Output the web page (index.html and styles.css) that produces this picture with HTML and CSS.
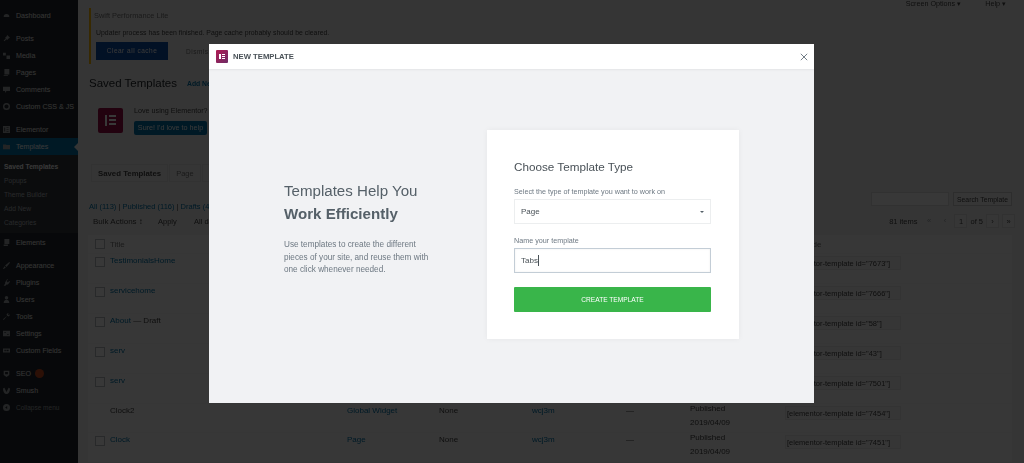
FILE: index.html
```html
<!DOCTYPE html>
<html>

<head>
    <title>New Template</title>
    <link rel="stylesheet" href="styles.css">
</head>

<body>
    <div class="wp_page">
        <!-- ADMIN MENU -->
        <aside class="admin_menu">
            <a class="menu_item first"><svg viewBox="0 0 10 10"><path d="M1 7a4 4 0 1 1 8 0z"/></svg>Dashboard</a>
            <a class="menu_item group"><svg viewBox="0 0 10 10"><path d="M6 0l4 4-2 1-2 2-1-1-3 3-1-1 3-3-1-1 2-2z"/></svg>Posts</a>
            <a class="menu_item"><svg viewBox="0 0 10 10"><path d="M0 1h4v4H0zM5 5h5v5H5z"/></svg>Media</a>
            <a class="menu_item"><svg viewBox="0 0 10 10"><path d="M2 0h7v8H2zM1 2v8h6v-1H1z"/></svg>Pages</a>
            <a class="menu_item"><svg viewBox="0 0 10 10"><path d="M0 1h10v6H5l-2 3V7H0z"/></svg>Comments</a>
            <a class="menu_item"><svg viewBox="0 0 10 10"><path d="M5 0a5 5 0 1 0 0 10A5 5 0 0 0 5 0zm0 2a3 3 0 1 1 0 6 3 3 0 0 1 0-6z"/></svg>Custom CSS &amp; JS</a>
            <a class="menu_item group"><svg viewBox="0 0 10 10"><path d="M0 0h10v10H0zM2 2v6h1V2zm3 0v1h3V2zm0 2.500v1h3v-1zM5 7v1h3V7z"/></svg>Elementor</a>
            <a class="menu_item current"><svg viewBox="0 0 10 10"><path d="M0 2h4l1 1h5v6H0z"/></svg>Templates</a>
            <div class="sub_menu">
                <a class="sub_item active">Saved Templates</a>
                <a class="sub_item">Popups</a>
                <a class="sub_item">Theme Builder</a>
                <a class="sub_item">Add New</a>
                <a class="sub_item">Categories</a>
            </div>
            <a class="menu_item elements"><svg viewBox="0 0 10 10"><path d="M2 0h7v7H2zM1 2v8h6V8H1z"/></svg>Elements</a>
            <a class="menu_item group"><svg viewBox="0 0 10 10"><path d="M9 0l1 1-5 6-2-2zM2 6l2 2-3 2H0z"/></svg>Appearance</a>
            <a class="menu_item"><svg viewBox="0 0 10 10"><path d="M6 0l1 1-2 2 2 2 2-2 1 1-3 4-2 0-2 2-2-1 2-2V5z"/></svg>Plugins</a>
            <a class="menu_item"><svg viewBox="0 0 10 10"><path d="M5 0a2.500 2.500 0 1 1 0 5 2.500 2.500 0 0 1 0-5zM1 10c0-6 8-6 8 0z"/></svg>Users</a>
            <a class="menu_item"><svg viewBox="0 0 10 10"><path d="M7 0l-2 2 1 2-6 5 1 1 5-6 2 1 2-2-1-1-1 1-1-1 1-1z"/></svg>Tools</a>
            <a class="menu_item"><svg viewBox="0 0 10 10"><path d="M0 1h10v8H0zM2 3v1h2V3zm4 3v1h2V6z"/></svg>Settings</a>
            <a class="menu_item"><svg viewBox="0 0 10 10"><path d="M0 2h10v6H0zM2 4v2h2V4zm3 0v2h3V4z"/></svg>Custom Fields</a>
            <a class="menu_item group"><svg viewBox="0 0 10 10"><path d="M1 1h8v6L5 10 1 7zM3 3v3h4V3z"/></svg>SEO <span class="badge"></span></a>
            <a class="menu_item"><svg viewBox="0 0 10 10"><path d="M0 2l2-1 3 6 3-6 2 1c0 5-2 8-5 8S0 7 0 2z"/></svg>Smush</a>
            <a class="menu_item collapse"><svg viewBox="0 0 10 10"><path d="M5 0a5 5 0 1 0 0 10A5 5 0 0 0 5 0zM6 3v4L3 5z"/></svg>Collapse menu</a>
        </aside>

        <!-- PAGE BEHIND THE DIALOG -->
        <main class="wp_content">
            <div class="screen_tabs">
                <span>Screen Options &#9662;</span>
                <span>Help &#9662;</span>
            </div>
            <div class="notice">
                <p class="notice_title">Swift Performance Lite</p>
                <p class="notice_text">Updater process has been finished. Page cache probably should be cleared.</p>
                <div class="notice_buttons">
                    <span class="clear_button">Clear all cache</span>
                    <span class="dismiss_button">Dismiss</span>
                </div>
            </div>
            <div class="page_title">
                <h1>Saved Templates</h1>
                <span class="add_new">Add New</span>
            </div>
            <div class="rating_box">
                <span class="rating_logo"><i></i><b></b></span>
                <div>
                    <p>Love using Elementor? Elementor is great</p>
                    <span class="rating_button">Sure! I'd love to help</span>
                </div>
            </div>
            <div class="tabs">
                <span class="tab active">Saved Templates</span>
                <span class="tab">Page</span>
                <span class="tab">Section</span>
            </div>
            <div class="search_row">
                <span class="search_input"></span>
                <span class="search_button">Search Template</span>
            </div>
            <div class="filter_links"><a>All (113)</a> | <a>Published (116)</a> | <a>Drafts (4)</a></div>
            <div class="bulk_row">
                <span class="bulk_select">Bulk Actions &#8597;</span>
                <span class="bulk_apply">Apply</span>
                <span class="bulk_all">All dates</span>
                <div class="pagination">
                    <span class="items">81 items</span>
                    <span class="page_btn">&laquo;</span>
                    <span class="page_btn">&lsaquo;</span>
                    <span class="page_btn on">1</span>
                    <span>of 5</span>
                    <span class="page_btn on">&rsaquo;</span>
                    <span class="page_btn on">&raquo;</span>
                </div>
            </div>
            <table class="list_table">
                <thead>
                    <tr>
                        <td class="check"><span></span></td>
                        <td class="title_cell">Title</td>
                        <td class="type_cell"></td>
                        <td class="none_cell"></td>
                        <td class="author_cell"></td>
                        <td class="dash_cell"></td>
                        <td class="date_cell"></td>
                        <td>Shortcode</td>
                    </tr>
                </thead>
                <tbody>
                    <tr>
                        <td class="check"><span></span></td>
                        <td class="title_cell"><a>TestimonialsHome</a></td>
                        <td></td><td></td><td></td><td></td><td></td>
                        <td><span class="shortcode">[elementor-template id="7673"]</span></td>
                    </tr>
                    <tr>
                        <td class="check"><span></span></td>
                        <td class="title_cell"><a>servicehome</a></td>
                        <td></td><td></td><td></td><td></td><td></td>
                        <td><span class="shortcode">[elementor-template id="7666"]</span></td>
                    </tr>
                    <tr>
                        <td class="check"><span></span></td>
                        <td class="title_cell"><a>About</a> — Draft</td>
                        <td></td><td></td><td></td><td></td><td></td>
                        <td><span class="shortcode">[elementor-template id="58"]</span></td>
                    </tr>
                    <tr>
                        <td class="check"><span></span></td>
                        <td class="title_cell"><a>serv</a></td>
                        <td></td><td></td><td></td><td></td><td></td>
                        <td><span class="shortcode">[elementor-template id="43"]</span></td>
                    </tr>
                    <tr>
                        <td class="check"><span></span></td>
                        <td class="title_cell"><a>serv</a></td>
                        <td></td><td></td><td></td><td></td><td></td>
                        <td><span class="shortcode">[elementor-template id="7501"]</span></td>
                    </tr>
                    <tr>
                        <td class="check"></td>
                        <td class="title_cell">Clock2</td>
                        <td><a>Global Widget</a></td>
                        <td>None</td>
                        <td><a>wcj3m</a></td>
                        <td>—</td>
                        <td><span class="date_text">Published<br>2019/04/09</span></td>
                        <td><span class="shortcode">[elementor-template id="7454"]</span></td>
                    </tr>
                    <tr>
                        <td class="check"><span></span></td>
                        <td class="title_cell"><a>Clock</a></td>
                        <td><a>Page</a></td>
                        <td>None</td>
                        <td><a>wcj3m</a></td>
                        <td>—</td>
                        <td><span class="date_text">Published<br>2019/04/09</span></td>
                        <td><span class="shortcode">[elementor-template id="7451"]</span></td>
                    </tr>
                </tbody>
            </table>
        </main>
    </div>

    <div class="overlay"></div>

    <!-- NEW TEMPLATE DIALOG -->
    <div class="dialog">
        <header class="dialog_header">
            <span class="dialog_logo"><i></i><b></b></span>
            <span class="dialog_title">NEW TEMPLATE</span>
            <svg class="dialog_close" viewBox="0 0 10 10"><path d="M1 1l8 8M9 1l-8 8"/></svg>
        </header>
        <div class="dialog_body">
            <div class="dialog_intro">
                <h2>Templates Help You <strong>Work Efficiently</strong></h2>
                <p>Use templates to create the different pieces of your site, and reuse them with one click whenever needed.</p>
            </div>
            <form class="template_form">
                <h3>Choose Template Type</h3>
                <label>Select the type of template you want to work on</label>
                <div class="select_box">Page<span class="select_arrow"></span></div>
                <label class="name_label">Name your template</label>
                <div class="name_input">Tabs<span class="caret"></span></div>
                <div class="create_button">CREATE TEMPLATE</div>
            </form>
        </div>
    </div>
</body>

</html>
```
FILE: styles.css
```css
* {
    box-sizing: border-box;
}

html,
body {
    margin: 0;
    height: 463px;
    overflow: hidden;
}

body {
    position: relative;
    font-family: "Liberation Sans", Arial, sans-serif;
    background-color: #f1f1f1;
}

p,
h1,
h2,
h3 {
    margin: 0;
    font-weight: normal;
}

.wp_page {
    display: flex;
    height: 463px;
    filter: blur(0.7px);
    font-size: 8px;
    color: #444;
}

a {
    color: #0073aa;
}

/* admin menu */
.admin_menu {
    flex: 0 0 78px;
    width: 78px;
    min-width: 0;
    padding-top: 7px;
    background-color: #23282d;
}

.menu_item {
    display: flex;
    align-items: center;
    gap: 6px;
    height: 17px;
    padding-left: 3px;
    font-size: 7.1px;
    white-space: nowrap;
    color: #eee;
}

.menu_item svg {
    flex: 0 0 7px;
    width: 7px;
    height: 7px;
    fill: #a0a5aa;
}

.menu_item.group {
    margin-top: 6px;
}

.menu_item.current {
    margin-top: 0;
    background-color: #0073aa;
    color: #fff;
    position: relative;
}

.menu_item.current::after {
    content: "";
    position: absolute;
    right: 0;
    top: 5px;
    border: 4px solid transparent;
    border-right-color: #f1f1f1;
    border-left: 0;
}

.menu_item.elements {
    margin-top: 1px;
}

.menu_item.collapse {
    font-size: 6.5px;
    color: #a0a5aa;
}

.sub_menu {
    display: flex;
    flex-direction: column;
    padding: 5px 0 3px 4px;
    background-color: #32373c;
}

.sub_item {
    height: 14px;
    line-height: 14px;
    font-size: 6.7px;
    color: #b4b9be;
}

.sub_item.active {
    font-weight: bold;
    color: #fff;
}

.badge {
    display: inline-block;
    width: 9px;
    height: 9px;
    margin-left: -2px;
    border-radius: 50%;
    background-color: #ca4a1f;
}

/* page behind */
.wp_content {
    position: relative;
    flex: 1;
    padding: 8px 12px 0 11px;
    min-width: 0;
}

.screen_tabs {
    position: absolute;
    top: -1px;
    right: 18px;
    display: flex;
    gap: 24px;
    font-size: 7.2px;
}

.notice {
    height: 56px;
    padding: 3px 0 0 3px;
    border-left: 2px solid #ffb900;
    font-size: 6.9px;
}

.notice_title {
    font-size: 7.4px;
    color: #777;
}

.notice_text {
    margin-top: 9px;
    padding-left: 2px;
}

.notice_buttons {
    display: flex;
    align-items: center;
    gap: 18px;
    margin-top: 6px;
    padding-left: 2px;
}

.clear_button {
    width: 72px;
    height: 18px;
    line-height: 18px;
    text-align: center;
    font-size: 6.5px;
    letter-spacing: 0.5px;
    background-color: #0d4fa8;
    color: #fff;
}

.dismiss_button {
    font-size: 6.5px;
    letter-spacing: 0.5px;
    color: #777;
}

.page_title {
    display: flex;
    align-items: center;
    gap: 10px;
    margin-top: 12px;
}

.page_title h1 {
    font-size: 11.5px;
    line-height: 15px;
    color: #23282d;
}

.add_new {
    font-size: 6.8px;
    font-weight: bold;
    color: #0073aa;
}

.rating_box {
    display: flex;
    gap: 11px;
    height: 48px;
    margin-top: 8px;
    padding: 9px 0 0 9px;
    font-size: 7.2px;
}

.rating_box p {
    margin-top: -2px;
}

.rating_logo {
    display: flex;
    gap: 2px;
    width: 25px;
    height: 25px;
    padding: 7px 7px;
    border-radius: 2px;
    background-color: #9b0a46;
}

.rating_logo i {
    width: 2px;
    background-color: #fff;
}

.rating_logo b {
    flex: 1;
    background: repeating-linear-gradient(#fff 0 2px, transparent 2px 4px);
}

.rating_button {
    display: block;
    width: 73px;
    height: 14px;
    margin-top: 6px;
    line-height: 14px;
    text-align: center;
    border-radius: 2px;
    background-color: #0073aa;
    color: #fff;
}

.tabs {
    display: flex;
    gap: 1px;
    margin-top: 17px;
    padding-left: 2px;
    font-size: 7.5px;
}

.tab {
    height: 18px;
    padding: 0 6px;
    line-height: 18px;
    color: #777;
    border: 1px solid #e4e4e4;
}

.tab.active {
    font-size: 7.8px;
    font-weight: bold;
    color: #444;
}

.search_row {
    display: flex;
    justify-content: flex-end;
    gap: 4px;
    height: 14px;
    margin-top: 10px;
}

.search_input {
    width: 78px;
    background-color: #fff;
    border: 1px solid #ddd;
}

.search_button {
    width: 59px;
    line-height: 13px;
    text-align: center;
    font-size: 6.8px;
    background-color: #f7f7f7;
    border: 1px solid #ccc;
}

.filter_links {
    margin-top: -4px;
    height: 10px;
    line-height: 10px;
    font-size: 7.5px;
}

.bulk_row {
    display: flex;
    align-items: center;
    height: 14px;
    margin-top: 2px;
    padding-left: 4px;
    font-size: 7.5px;
}

.bulk_select {
    width: 65px;
    font-size: 8px;
}

.bulk_apply {
    width: 36px;
}

.pagination {
    display: flex;
    align-items: center;
    gap: 3px;
    margin-left: auto;
    margin-right: -3px;
}

.items {
    margin-right: 2px;
}

.page_btn {
    width: 13px;
    height: 14px;
    line-height: 13px;
    text-align: center;
    color: #a0a5aa;
}

.page_btn.on {
    color: #444;
    border: 1px solid #ddd;
    background-color: #f7f7f7;
}

.list_table {
    width: 924px;
    margin-top: 7px;
    margin-left: -1px;
    border-collapse: collapse;
    table-layout: fixed;
    background-color: #f9f9f9;
    font-size: 8px;
}

.list_table thead td {
    height: 18px;
    color: #777;
}

.list_table tbody td {
    height: 30px;
    padding-top: 0;
    line-height: 14px;
    vertical-align: top;
    border-top: 1px solid #f4f4f4;
}

.list_table tbody tr:nth-child(6) td {
    height: 29px;
}

.list_table td {
    padding-bottom: 0;
    padding-right: 0;
    padding-left: 0;
    color: #444;
}

.list_table .check {
    width: 22px;
    padding-left: 7px;
}

.check span {
    display: block;
    width: 10px;
    height: 10px;
    border: 1px solid #b4b9be;
    background-color: #fff;
}

.list_table tbody .check span {
    margin-top: 3px;
}

.title_cell {
    width: 237px;
}

.type_cell {
    width: 92px;
}

.none_cell {
    width: 93px;
}

.author_cell {
    width: 94px;
}

.dash_cell {
    width: 64px;
}

.date_cell {
    width: 95px;
}

.date_text {
    display: block;
    margin-top: -2px;
}

.shortcode {
    display: block;
    width: 116px;
    height: 14px;
    margin-top: 2px;
    padding-left: 1px;
    line-height: 13px;
    font-size: 7.5px;
    white-space: nowrap;
    background-color: #f5f5f5;
    border: 1px solid #e6e6e6;
}

/* dialog */
.overlay {
    position: absolute;
    inset: 0;
    background-color: rgba(0, 0, 0, 0.78);
}

.dialog {
    position: absolute;
    left: 209px;
    top: 44px;
    width: 605px;
    height: 359px;
    display: flex;
    flex-direction: column;
    background-color: #f1f2f4;
    color: #556068;
    filter: blur(0.3px);
}

.dialog_header {
    display: flex;
    align-items: center;
    flex: 0 0 25px;
    padding: 0 7px;
    background-color: #fff;
    box-shadow: 0 1px 2px rgba(0, 0, 0, 0.06);
}

.dialog_logo {
    display: flex;
    gap: 1px;
    width: 12px;
    height: 13px;
    padding: 4px 3px;
    border-radius: 1px;
    background: linear-gradient(135deg, #b01b52, #6e2c66);
}

.dialog_logo i {
    width: 1.5px;
    background-color: #fff;
}

.dialog_logo b {
    flex: 1;
    background: repeating-linear-gradient(#fff 0 1px, transparent 1px 2px);
}

.dialog_title {
    margin-left: 5px;
    font-size: 7.7px;
    font-weight: bold;
    color: #495157;
}

.dialog_close {
    width: 8px;
    height: 8px;
    margin-left: auto;
    margin-right: -1px;
    fill: none;
    stroke: #6d7882;
    stroke-width: 1.2;
}

.dialog_body {
    flex: 1;
    display: flex;
    padding: 61px 0 0 75px;
}

.dialog_intro {
    flex: 0 0 203px;
    padding-top: 49px;
}

.dialog_intro h2 {
    font-size: 15.1px;
    line-height: 23px;
    color: #556068;
}

.dialog_intro strong {
    display: block;
    font-weight: bold;
}

.dialog_intro p {
    width: 150px;
    margin-top: 14px;
    font-size: 8.2px;
    line-height: 12.5px;
    color: #6d7882;
}

.template_form {
    width: 252px;
    height: 209px;
    padding: 29px 28px 0 27px;
    background-color: #fff;
    box-shadow: 0 0 6px rgba(0, 0, 0, 0.05);
}

.template_form h3 {
    font-size: 11.7px;
    line-height: 16px;
    color: #495157;
}

.template_form label {
    display: block;
    margin-top: 12px;
    font-size: 7.2px;
    line-height: 10px;
    color: #6d7882;
}

.template_form .name_label {
    margin-top: 12px;
}

.select_box,
.name_input {
    display: flex;
    align-items: center;
    height: 25px;
    margin-top: 2px;
    padding-left: 6px;
    font-size: 8px;
    color: #495157;
    background-color: #fff;
    border: 1px solid #eceeef;
}

.name_input {
    margin-top: 2px;
    border: 1px solid #c3cdd6;
    box-shadow: inset 0 0 2px rgba(0, 0, 0, 0.08);
}

.select_arrow {
    margin-left: auto;
    margin-right: 6px;
    border: 2px solid transparent;
    border-top: 2.5px solid #556068;
    border-bottom: 0;
}

.caret {
    width: 1px;
    height: 11px;
    background-color: #495157;
}

.create_button {
    height: 25px;
    margin-top: 14px;
    line-height: 25px;
    text-align: center;
    font-size: 6.6px;
    color: #fff;
    border-radius: 1px;
    background-color: #39b54a;
}
```
